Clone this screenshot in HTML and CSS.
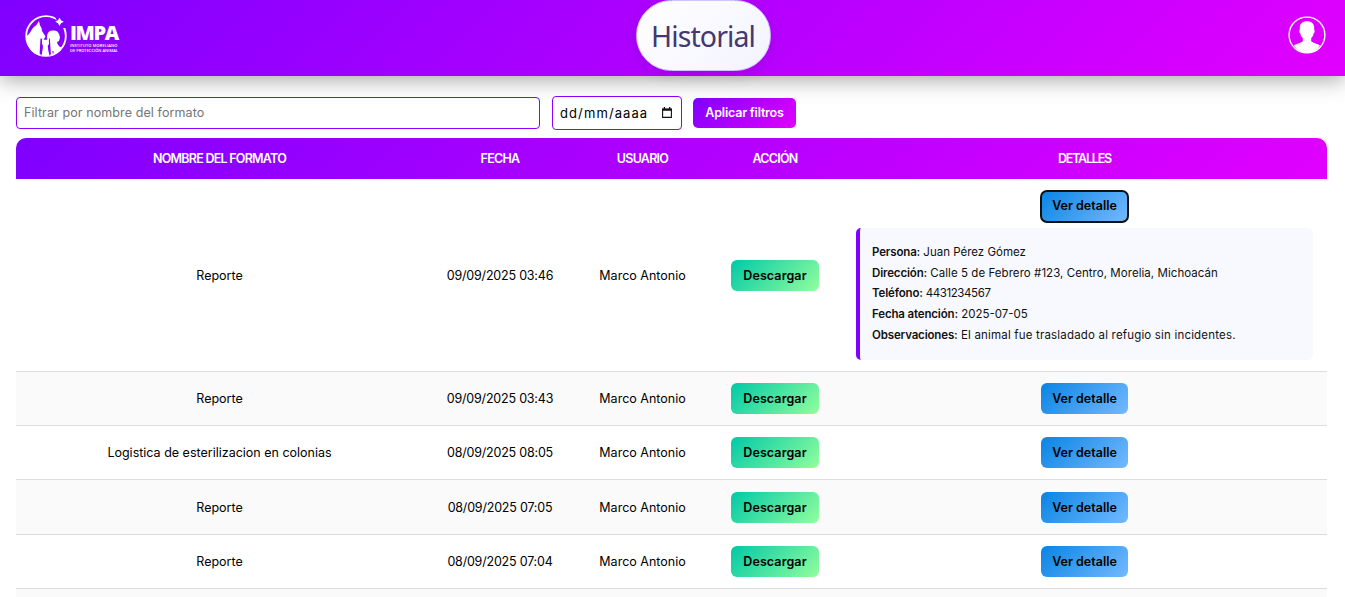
FILE: index.html
```html
<!DOCTYPE html>
<html lang="es">
<head>
<meta charset="utf-8">
<title>Historial</title>
<link rel="stylesheet" href="styles.css">
</head>
<body>
<header class="topbar">
  <div class="brand">
    <svg class="brand-mark" viewBox="0 0 42 44" width="42" height="44">
      <circle cx="21" cy="22" r="19.8" fill="none" stroke="#fff" stroke-width="1.800"/>
      <path d="M29 1h12v13h-5z" fill="#7f00ff"/>
      <path d="M34.500 3.500l1.500 2.800 2.800 1.500-2.800 1.500-1.500 2.800-1.500-2.800-2.800-1.500 2.800-1.500z" fill="#fff"/>
      <path d="M1.500 22c2-1 4-4 6-7.500 1-1.500 3-2.500 4-3.500l2.500-4 1 4.500c1.500 1.500 2 4 2 5.500l3.500 5.500-1.500 2.500-3.500-.5-1 17C7.500 40.500 1.500 33 1.500 22z" fill="#fff"/>
      <path d="M22.500 20c1-3 3.500-4 6.500-3.500 4 0 5.500 3.500 6 7l-1 3.500-2 1c.5 3 3 6 5.500 5-3 5-7 8-11.500 9l-1-15.500c-3 0-3.500-3.500-2.500-6.500z" fill="#fff"/>
      <path d="M17.200 24l2 1.700h2.600l2-1.700.2 6-1.300 2 1.500 9h-7.400l1-9-1-3z" fill="#fff"/>
      <path d="M16.500 25.500v5l.8 2-1.300 9M24.500 24.500v6l-1 2 1.500 9" fill="none" stroke="#7f00ff" stroke-width=".9"/>
      <path d="M28 37v2.500" stroke="#7f00ff"/>
    </svg>
    <div class="brand-text">
      <span class="brand-name">IMPA</span>
      <span class="brand-sub">INSTITUTO MORELIANO</span>
      <span class="brand-sub">DE PROTECCIÓN ANIMAL</span>
    </div>
  </div>
  <h1 class="title">Historial</h1>
  <svg class="avatar" viewBox="0 0 38 38" width="38" height="38">
    <circle cx="19" cy="19" r="17.900" fill="none" stroke="#fff" stroke-width="1.400"/>
    <path d="M19 5.300c4.600 0 7.200 2.400 7.200 6.500v2.100c.8.300.6 2.800-.6 3.600-.3 2-1.200 3.500-2.400 4.600v3.200c1.300 1.700 5.800 2 8.900 4.400A17 17 0 0 1 19 37 17 17 0 0 1 5.900 29.700c3.100-2.400 7.600-2.700 8.900-4.400v-3.200c-1.200-1.100-2.100-2.600-2.400-4.600-1.200-.8-1.400-3.300-.6-3.600v-2.100c0-4.100 2.600-6.500 7.200-6.500z" fill="#fff"/>
  </svg>
</header>

<main class="content">
  <form class="filters">
    <input class="filter-name" type="text" placeholder="Filtrar por nombre del formato">
    <div class="filter-date"><span>dd/mm/aaaa</span>
      <svg viewBox="0 0 10 11" width="10" height="11"><path d="M.6 2.200h8.800v8.200H.6z" fill="none" stroke="#111" stroke-width="1.100"/><path d="M0 1.500h10v2.300H0zM1.700 0H3v2H1.700zM7 0h1.300v2H7z" fill="#111"/></svg>
    </div>
    <button class="btn apply" type="button">Aplicar filtros</button>
  </form>

  <table class="history">
    <colgroup><col class="c-name"><col class="c-date"><col class="c-user"><col class="c-action"><col class="c-detail"></colgroup>
    <thead><tr><th>NOMBRE DEL FORMATO</th><th>FECHA</th><th>USUARIO</th><th>ACCIÓN</th><th>DETALLES</th></tr></thead>
    <tbody>
      <tr class="open"><td>Reporte</td><td class="date">09/09/2025 03:46</td><td>Marco Antonio</td><td><button class="btn download">Descargar</button></td>
        <td><button class="btn view active">Ver detalle</button>
          <div class="detail">
            <p><b>Persona:</b> Juan Pérez Gómez</p>
            <p class="address"><b>Dirección:</b> Calle 5 de Febrero #123, Centro, Morelia, Michoacán</p>
            <p class="phone"><b>Teléfono:</b> 4431234567</p>
            <p><b>Fecha atención:</b> 2025-07-05</p>
            <p class="notes"><b>Observaciones:</b> El animal fue trasladado al refugio sin incidentes.</p>
          </div></td></tr>
      <tr><td>Reporte</td><td class="date">09/09/2025 03:43</td><td>Marco Antonio</td><td><button class="btn download">Descargar</button></td><td><button class="btn view">Ver detalle</button></td></tr>
      <tr><td>Logistica de esterilizacion en colonias</td><td class="date">08/09/2025 08:05</td><td>Marco Antonio</td><td><button class="btn download">Descargar</button></td><td><button class="btn view">Ver detalle</button></td></tr>
      <tr class="tall"><td>Reporte</td><td class="date">08/09/2025 07:05</td><td>Marco Antonio</td><td><button class="btn download">Descargar</button></td><td><button class="btn view">Ver detalle</button></td></tr>
      <tr><td>Reporte</td><td class="date">08/09/2025 07:04</td><td>Marco Antonio</td><td><button class="btn download">Descargar</button></td><td><button class="btn view">Ver detalle</button></td></tr>
      <tr class="last"><td></td><td></td><td></td><td></td><td></td></tr>
    </tbody>
  </table>
</main>
</body>
</html>
```
FILE: styles.css
```css
* { box-sizing: border-box; }
html, body { height: 100%; }
body {
  margin: 0;
  overflow: hidden;
  background: #fff;
  color: #000;
  font-family: Inter, "Liberation Sans", sans-serif;
  font-size: 12.5px;
}
.topbar {
  position: relative;
  display: grid;
  grid-template-columns: 611px auto 1fr;
  align-items: start;
  height: 75.500px;
  padding: 0 19px 0 25px;
  background: linear-gradient(135deg, #7f00ff, #e100ff);
  box-shadow: 0 4px 20px rgba(0, 0, 0, .35);
}
.brand { display: flex; gap: 3px; padding-top: 14px; }
.brand-text { display: flex; flex-direction: column; padding-top: 9px; color: #fff; white-space: nowrap; }
.brand-name { font: 800 20px/20px "Open Sans", sans-serif; letter-spacing: -1.400px; }
.brand-sub { height: 5px; font: 600 4px/5px "Open Sans", sans-serif; }
.brand-sub:nth-child(2) { letter-spacing: .1px; }
.title {
  display: flex;
  align-items: center;
  justify-content: center;
  width: 135px;
  height: 71px;
  margin: 0;
  padding: 1px 1px 0 0;
  border: 1px solid #cfc4fb;
  border-radius: 36px;
  background: linear-gradient(135deg, #fff, #f3f3ff);
  box-shadow: 0 4px 15px rgba(0, 0, 0, .1);
  color: #43396e;
  font: 400 28.500px/40px "Noto Sans", sans-serif;
  letter-spacing: -.9px;
}
.avatar { justify-self: end; margin-top: 16px; }
.content { padding: 20.500px 18px 0 16px; }
.filters { display: flex; align-items: center; height: 34px; margin-bottom: 8px; }
.filter-name {
  width: 524px;
  height: 32px;
  margin-right: 12px;
  padding: 0 7px 1px;
  border: 1px solid #8f00ff;
  border-radius: 4px;
  outline: 0;
  color: #000;
  font: inherit;
  letter-spacing: .1px;
}
.filter-name::placeholder { color: #757575; }
.filter-date {
  display: flex;
  align-items: center;
  justify-content: space-between;
  width: 130px;
  height: 34px;
  margin-right: 11px;
  padding: 0 9px 1px 7px;
  border: 1px solid #8f00ff;
  border-radius: 4px;
  font-size: 13px;
  letter-spacing: 1.100px;
}
.btn {
  display: inline-block;
  height: 31px;
  padding: 0;
  border: 0;
  border-radius: 6px;
  color: #000;
  font: 600 12.500px/31px Inter, sans-serif;
  text-align: center;
  vertical-align: middle;
}
.apply { width: 103px; height: 30px; border-radius: 5px; background: linear-gradient(135deg, #7f00ff, #e100ff); color: #fff; line-height: 30px; letter-spacing: -.2px; }
.download { width: 88px; background: linear-gradient(135deg, #00c9a7, #92fe9d); letter-spacing: .1px; }
.view { width: 87px; background: linear-gradient(135deg, #0984e3, #74b9ff); }
.active { outline: 2px solid #101010; outline-offset: -1px; line-height: 30px; }
.history { width: 1311px; table-layout: fixed; border-spacing: 0; }
.c-name { width: 407px; }
.c-date { width: 154px; }
.c-user { width: 131px; }
.c-action { width: 134px; }
.c-detail { width: 485px; }
thead { background: linear-gradient(135deg, #7f00ff, #e100ff); clip-path: inset(0 round 10px 10px 0 0); }
th { height: 41px; padding: 0 0 1px; color: #fff; font-weight: 600; letter-spacing: -.75px; }
th:last-child { letter-spacing: -1.200px; }
td { height: 54px; padding: 0 14px; border-bottom: 1px solid #ddd; text-align: center; white-space: nowrap; }
.date { letter-spacing: -.2px; }
.open td { height: 193px; }
.tall td { height: 55px; }
.last td { height: 8px; border-bottom: 0; }
tbody tr:nth-child(even) { background: #fafafa; }
.detail {
  height: 132px;
  margin-top: 6px;
  padding: 14.500px 12px;
  border-left: 4px solid #7f00ff;
  border-radius: 5px;
  background: #f8f9fe;
  color: #111;
  font-size: 11.500px;
  line-height: 20.700px;
  text-align: left;
}
.detail p { margin: 0; }
.detail b { font-weight: 600; letter-spacing: -.15px; }
.address { letter-spacing: .05px; }
.phone { letter-spacing: -.4px; }
.notes { letter-spacing: .18px; }
```
